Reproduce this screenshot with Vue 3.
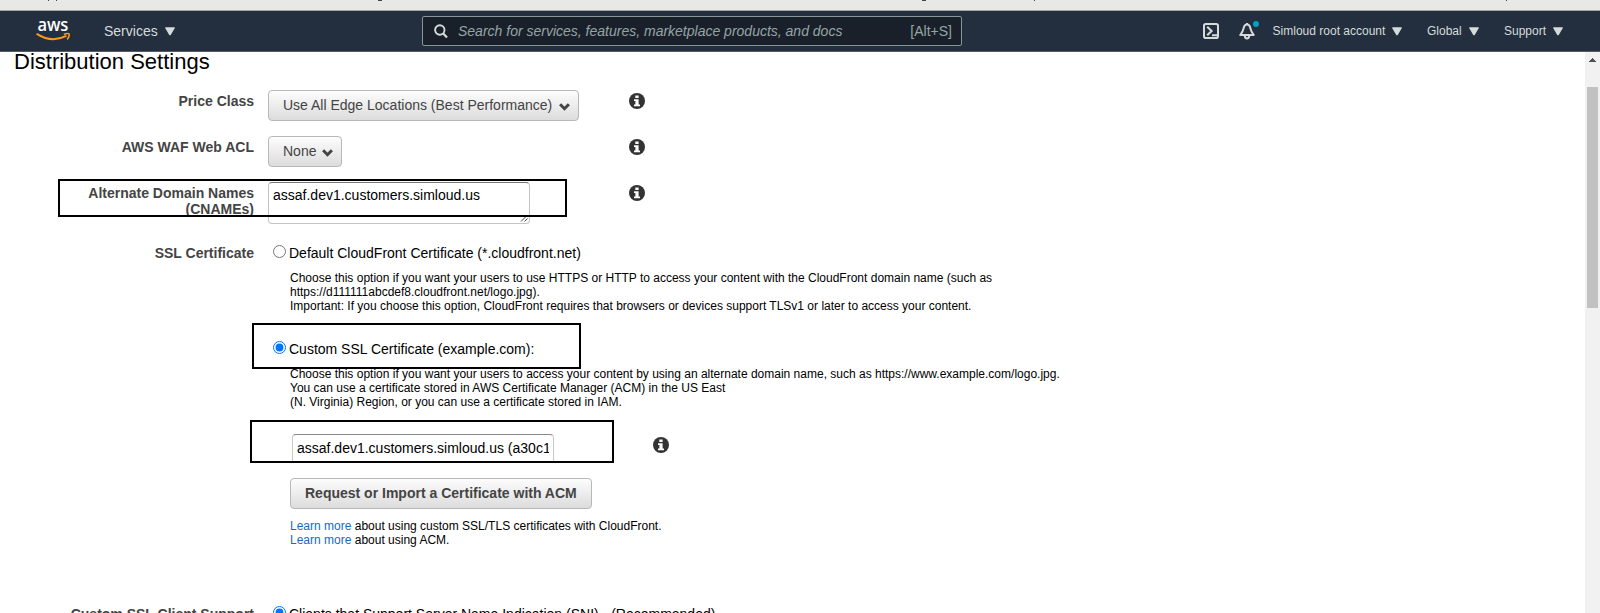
<script setup>
import { h } from 'vue'

const InfoIcon = () =>
  h('svg', { class: 'info', width: 16, height: 16, viewBox: '0 0 16 16' }, [
    h('circle', { cx: 8, cy: 8, r: 8, fill: '#333' }),
    h('path', { d: 'M6.3 2.4h3.3v2.5H6.3zM5 6.3h4.6v5.3H11v1.7H5v-1.7h1.4V8H5z', fill: '#fff' }),
  ])

const ChevronIcon = () =>
  h('svg', { class: 'chevron', width: 11, height: 8, viewBox: '0 0 11 8' }, [
    h('path', { d: 'M1.1 1.3 L5.5 5.7 L9.9 1.3', fill: 'none', stroke: '#444', 'stroke-width': 3 }),
  ])

const CaretIcon = () =>
  h('svg', { class: 'caret', width: 10, height: 9, viewBox: '0 0 10 9' }, [
    h('path', { d: 'M.7 .3h8.6q.8 .1 .4 .9L5.9 7.7q-.9 1-1.8 0L.3 1.2Q-.1 .4 .7 .3z', fill: '#d5dbdb' }),
  ])

const menus = [
  { name: 'Simloud root account', cls: 'account' },
  { name: 'Global', cls: 'global' },
  { name: 'Support', cls: 'support' },
]
</script>

<template>
  <div class="page">
    <div class="browser-strip">
      <i class="m1"></i><i class="m2"></i><i class="m3"></i><i class="m4"></i><i class="m5"></i><i class="m6"></i>
    </div>

    <header class="nav">
      <svg class="logo" width="36" height="24" viewBox="0 0 36 24">
        <text x="1.4" y="12.2" textLength="31" lengthAdjust="spacingAndGlyphs" class="logo-text">aws</text>
        <path d="M1.2 15.2Q15.5 24.2 29.8 17.2" fill="none" stroke="#f79a1f" stroke-width="2" stroke-linecap="round" />
        <path d="M27.8 15.5Q32.2 13.7 33.3 15.2Q33.6 17.7 31.2 20.4" fill="none" stroke="#f79a1f" stroke-width="1.5" stroke-linejoin="round" />
      </svg>
      <div class="services">Services<CaretIcon /></div>
      <div class="search">
        <svg width="14" height="15" viewBox="0 0 14 15">
          <circle cx="5.8" cy="6" r="4.7" fill="none" stroke="#d5dbdb" stroke-width="1.9" />
          <path d="M9.2 9.5L13 13.6" stroke="#d5dbdb" stroke-width="2.2" />
        </svg>
        <span class="placeholder">Search for services, features, marketplace products, and docs</span>
        <span class="hotkey">[Alt+S]</span>
      </div>
      <svg class="shell" width="16" height="16" viewBox="0 0 16 16" fill="none" stroke="#d5dbdb" stroke-width="2">
        <rect x="1" y="1" width="14" height="14" rx="1.8" />
        <path d="M4.2 3.8L8.6 8L4.2 12.2M9 12.3h5" stroke-width="2.1" />
      </svg>
      <svg class="bell" width="21" height="20" viewBox="0 0 21 20">
        <path d="M8 3.4C6 3.4 5 4.8 4.5 7.6C4 10.3 3 11.6 1.3 13.9H14.7C13 11.6 12 10.3 11.5 7.6C11 4.8 10 3.4 8 3.4ZM8 3V2M5.7 14.4Q5.9 17.4 8 17.4T10.3 14.4" fill="none" stroke="#d5dbdb" stroke-width="2" stroke-linejoin="round" />
        <circle cx="17" cy="3" r="3" fill="#00a1c9" />
      </svg>
      <div v-for="m in menus" :key="m.name" class="menu" :class="m.cls">{{ m.name }}<CaretIcon /></div>
    </header>

    <div class="body">
      <main class="content">
        <h1>Distribution Settings</h1>

        <div class="row">
          <div class="label">Price Class</div>
          <div class="field"><button class="btn select price">Use All Edge Locations (Best Performance)<ChevronIcon /></button></div>
          <InfoIcon />
        </div>

        <div class="row">
          <div class="label">AWS WAF Web ACL</div>
          <div class="field"><button class="btn select acl">None<ChevronIcon /></button></div>
          <InfoIcon />
        </div>

        <div class="row cnames">
          <div class="label">Alternate Domain Names (CNAMEs)</div>
          <div class="field">
            <div class="textarea">assaf.dev1.customers.simloud.us
              <svg class="grip" width="8" height="6" viewBox="0 0 8 6"><path d="M1 5.5L6 .5M4.5 5.5L7.5 2.5" stroke="#444" stroke-width="1" /></svg>
            </div>
          </div>
          <InfoIcon />
          <div class="mark mark-cnames"></div>
        </div>

        <div class="row ssl">
          <div class="label">SSL Certificate</div>
          <div class="field wide">
            <label class="option"><input type="radio" name="cert" />Default CloudFront Certificate (*.cloudfront.net)</label>
            <p class="help">Choose this option if you want your users to use HTTPS or HTTP to access your content with the CloudFront domain name (such as<br />https://d111111abcdef8.cloudfront.net/logo.jpg).<br />Important: If you choose this option, CloudFront requires that browsers or devices support TLSv1 or later to access your content.</p>

            <label class="option second"><input type="radio" name="cert" checked />Custom SSL Certificate (example.com):</label>
            <p class="help">Choose this option if you want your users to access your content by using an alternate domain name, such as https://www.example.com/logo.jpg.<br />You can use a certificate stored in AWS Certificate Manager (ACM) in the US East<br />(N. Virginia) Region, or you can use a certificate stored in IAM.</p>

            <div class="cert-line">
              <div class="cert-input"><span>assaf.dev1.customers.simloud.us (a30c1</span></div>
              <InfoIcon />
            </div>
            <button class="btn acm">Request or Import a Certificate with ACM</button>
            <p class="help links"><a>Learn more</a> about using custom SSL/TLS certificates with CloudFront.<br /><a>Learn more</a> about using ACM.</p>
            <div class="mark mark-custom"></div>
            <div class="mark mark-cert"></div>
          </div>
        </div>

        <div class="row client">
          <div class="label">Custom SSL Client Support</div>
          <div class="field wide">
            <label class="option"><input type="radio" name="sni" checked />Clients that Support Server Name Indication (SNI) - (Recommended)</label>
          </div>
        </div>
      </main>

      <aside class="scrollbar">
        <svg width="7" height="4" viewBox="0 0 7 4" shape-rendering="crispEdges"><path d="M3 0h1v1h1v1h1v1h1v1H0V3h1V2h1V1h1z" fill="#505050" /></svg>
        <div class="thumb"></div>
      </aside>
    </div>
  </div>
</template>

<style>
body {
  margin: 0;
  overflow: hidden;
}
.info {
  display: block;
  flex: none;
}
</style>

<style scoped>
.page {
  width: 1600px;
  height: 613px;
  overflow: hidden;
  background: #fff;
  color: #000;
  font-family: "Liberation Sans", Arial, sans-serif;
  font-size: 14px;
  line-height: 16px;
  display: flex;
  flex-direction: column;
  white-space: nowrap;
}
.browser-strip {
  box-sizing: border-box;
  height: 11px;
  flex: none;
  background: #e8e8e6;
  border-bottom: 1px solid #a3a7a0;
  display: flex;
}
.browser-strip i {
  width: 1px;
  height: 1px;
  background: #444;
}
.m1 { margin-left: 48px; }
.m2 { margin-left: 7px; }
.browser-strip .m3 { margin-left: 321px; width: 4px; }
.browser-strip .m4 { margin-left: 540px; width: 4px; }
.m5 { margin-left: 108px; }
.m6 { margin-left: 471px; }
.nav {
  box-sizing: border-box;
  height: 41px;
  flex: none;
  background: #232f3e;
  border-bottom: 1px solid #545b64;
  display: flex;
  align-items: center;
  color: #d5dbdb;
}
.logo {
  margin: 0 0 0 36px;
  flex: none;
  overflow: visible;
}
.logo-text {
  font: 600 18px "Open Sans", sans-serif;
  fill: #fff;
}
.services {
  display: flex;
  align-items: center;
  margin-left: 32px;
  width: 318px;
}
.services .caret {
  margin-left: 7px;
}
.search {
  box-sizing: border-box;
  width: 540px;
  height: 30px;
  border: 1px solid #879596;
  border-radius: 2px;
  background: #1a202a;
  display: flex;
  align-items: center;
  padding: 0 9px 0 11px;
  color: #95a5a6;
}
.placeholder {
  font-style: italic;
  margin-left: 10px;
  flex: 1;
}
.shell {
  margin-left: 241px;
}
.bell {
  margin-left: 20px;
  margin-top: -1px;
}
.menu {
  font-size: 12px;
  display: flex;
  align-items: center;
}
.menu .caret {
  margin-left: 7px;
}
.account {
  margin-left: 12.6px;
  width: 154.4px;
}
.global {
  width: 77px;
}
.body {
  flex: 1;
  min-height: 0;
  display: flex;
}
.content {
  flex: 1;
  overflow: hidden;
}
h1 {
  margin: 0 0 18px 14px;
  font-size: 22px;
  line-height: 20px;
  font-weight: 400;
}
.row {
  position: relative;
  display: flex;
  align-items: flex-start;
  height: 46px;
}
.label {
  width: 190px;
  padding: 3px 0 0 64px;
  text-align: right;
  font-weight: 700;
  color: #444;
  white-space: normal;
}
.field {
  width: 361px;
  margin-left: 14px;
}
.row > .info {
  margin-top: 3px;
}
.field.wide {
  width: 900px;
}
.btn {
  box-sizing: border-box;
  height: 31px;
  border: 1px solid #b8b8b8;
  border-radius: 4px;
  background: linear-gradient(#fdfdfd, #dcdcdc);
  color: #444;
  font: 14px "Liberation Sans", Arial, sans-serif;
  padding: 0 14px 2px;
  display: flex;
  align-items: center;
}
.select {
  justify-content: space-between;
  padding-right: 8px;
  white-space: nowrap;
}
.price {
  width: 311px;
}
.acl {
  width: 74px;
}
.chevron {
  flex: none;
  margin-top: 4px;
}
.cnames {
  height: 60px;
}
.textarea {
  position: relative;
  box-sizing: border-box;
  width: 262px;
  height: 42px;
  border: 1px solid #c4c4c4;
  border-top-color: #777;
  border-radius: 4px;
  padding: 4px;
}
.grip {
  position: absolute;
  right: 1px;
  bottom: 1px;
}
.mark {
  position: absolute;
  box-sizing: border-box;
  border: 2px solid #000;
}
.mark-cnames {
  left: 58px;
  top: -3px;
  width: 509px;
  height: 38px;
}
.ssl {
  height: 361px;
}
.ssl .field {
  position: relative;
}
.option {
  display: flex;
  height: 16px;
  margin-top: 3px;
}
.option input {
  width: 13px;
  height: 13px;
  margin: 0 3px 0 5px;
}
.help {
  margin: 10px 0 0 22px;
  font-size: 12px;
  line-height: 14px;
  height: 42px;
}
.help + .second {
  margin-top: 28px;
}
.cert-line {
  display: flex;
  margin: 25px 0 0 24px;
  height: 28px;
}
.cert-input {
  box-sizing: border-box;
  width: 262px;
  height: 29px;
  border: 1px solid #c8c8c8;
  border-top-color: #888;
  border-bottom: 0;
  border-radius: 4px 4px 0 0;
  padding: 5px 4px 0;
}
.cert-input span {
  display: block;
  overflow: hidden;
}
.cert-line .info {
  margin: 3px 0 0 99px;
}
.acm {
  margin: 16px 0 0 22px;
  font-weight: 700;
}
.links {
  margin-top: 10px;
}
a {
  color: #146ac4;
}
.mark-custom {
  left: -16px;
  top: 81px;
  width: 329px;
  height: 46px;
}
.mark-cert {
  left: -18px;
  top: 178px;
  width: 364px;
  height: 43px;
}
.scrollbar {
  width: 15px;
  background: #f1f1f1;
}
.scrollbar svg {
  display: block;
  margin: 6px 0 0 4px;
}
.thumb {
  margin: 25px 0 0 2px;
  width: 11px;
  height: 221px;
  background: #c1c1c1;
}
</style>
